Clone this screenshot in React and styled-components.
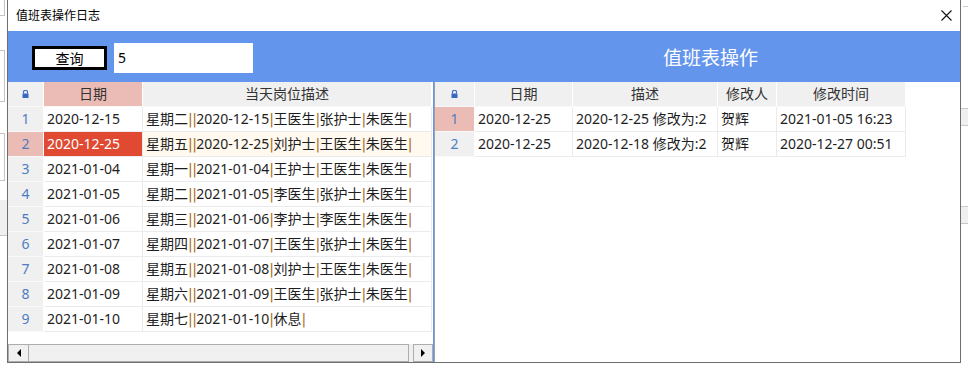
import styled, { createGlobalStyle } from 'styled-components';

const GlobalStyle = createGlobalStyle`
  html, body {
    margin: 0;
    padding: 0;
    background: #FFFFFF;
  }

  body {
    font-family: "Noto Sans", "Noto Sans CJK SC", sans-serif;
    color: #1E1E1E;
  }
`

const dutyRows = [
  ["2020-12-15", "星期二||2020-12-15|王医生|张护士|朱医生|"],
  ["2020-12-25", "星期五||2020-12-25|刘护士|王医生|朱医生|"],
  ["2021-01-04", "星期一||2021-01-04|王护士|王医生|朱医生|"],
  ["2021-01-05", "星期二||2021-01-05|李医生|张护士|朱医生|"],
  ["2021-01-06", "星期三||2021-01-06|李护士|李医生|朱医生|"],
  ["2021-01-07", "星期四||2021-01-07|王医生|张护士|朱医生|"],
  ["2021-01-08", "星期五||2021-01-08|刘护士|王医生|朱医生|"],
  ["2021-01-09", "星期六||2021-01-09|王医生|张护士|朱医生|"],
  ["2021-01-10", "星期七||2021-01-10|休息|"],
]

const logRows = [
  ["2020-12-25", "2020-12-25 修改为:2", "贺辉", "2021-01-05 16:23"],
  ["2020-12-25", "2020-12-18 修改为:2", "贺辉", "2020-12-27 00:51"],
]

const LEFT_COLS = "36px 99px 289px"
const RIGHT_COLS = "40px 98px 145px 59px 129px"

function PipeText({ text }) {
  const parts = text.split("|")
  return (
    <span>
      {parts.map((part, i) => (
        <span key={i}>
          {part}
          {i < parts.length - 1 && <Pipe>|</Pipe>}
        </span>
      ))}
    </span>
  )
}

function LockIcon() {
  return (
    <svg width="7" height="8" viewBox="0 0 7 8">
      <path d="M1.5 3.5 V2.2 A2 2 0 0 1 5.5 2.2 V3.5" fill="none" stroke="#3B67C4" strokeWidth="1.1" />
      <rect x="0.5" y="3.5" width="6" height="4.5" fill="#3B67C4" />
    </svg>
  )
}

function CloseIcon() {
  return (
    <svg width="11" height="11" viewBox="0 0 11 11">
      <path d="M0.5 0.5 L10.5 10.5 M10.5 0.5 L0.5 10.5" stroke="#111" strokeWidth="1.1" />
    </svg>
  )
}

export default function App() {
  return (
    <>
      <GlobalStyle />
      <Page>

        <Backdrop>
          <BackBox $h={15} $top={0} $open="top" />
          <BackBox $h={50} $top={34} />
          <BackBox $h={46} $top={31} />
          <BackFill $h={35} $top={19} />
        </Backdrop>

        <Dialog>
          <TitleBar>
            <span>值班表操作日志</span>
            <CloseIcon />
          </TitleBar>

          <Body>
            <Toolbar>
              <ToolLeft>
                <QueryButton>查询</QueryButton>
                <SearchInput>5</SearchInput>
              </ToolLeft>
              <ToolTitle>值班表操作</ToolTitle>
            </Toolbar>

            <Panels>
              <LeftPanel>
                <Row $cols={LEFT_COLS}>
                  <Cell $kind="corner"><LockIcon /></Cell>
                  <Cell $kind="head" $tone="pink">日期</Cell>
                  <Cell $kind="head">当天岗位描述</Cell>
                </Row>
                {dutyRows.map((row, i) => (
                  <Row key={i} $cols={LEFT_COLS}>
                    <Cell $kind="rowhead" $tone={i === 1 ? "pink" : null}>{i + 1}</Cell>
                    <Cell $kind="data" $tone={i === 1 ? "red" : null}>{row[0]}</Cell>
                    <Cell $kind="data" $tone={i === 1 ? "cream" : null}><PipeText text={row[1]} /></Cell>
                  </Row>
                ))}
                <Filler />
                <ScrollBar>
                  <ArrowButton $first><Arrow $dir="left" /></ArrowButton>
                  <Thumb />
                  <TrackGap />
                  <ArrowButton><Arrow $dir="right" /></ArrowButton>
                </ScrollBar>
              </LeftPanel>

              <RightPanel>
                <Row $cols={RIGHT_COLS}>
                  <Cell $kind="corner"><LockIcon /></Cell>
                  <Cell $kind="head">日期</Cell>
                  <Cell $kind="head">描述</Cell>
                  <Cell $kind="head">修改人</Cell>
                  <Cell $kind="head">修改时间</Cell>
                </Row>
                {logRows.map((row, i) => (
                  <Row key={i} $cols={RIGHT_COLS}>
                    <Cell $kind="rowhead" $tone={i === 0 ? "pink" : null}>{i + 1}</Cell>
                    {row.map((value, j) => (
                      <Cell key={j} $kind="data">{value}</Cell>
                    ))}
                  </Row>
                ))}
              </RightPanel>
            </Panels>
          </Body>
        </Dialog>

        <Backdrop>
          <BackLine $top={6} />
          <BackFill $h={16} $top={101} $lined />
          <BackFill $h={16} $top={80} $lined />
        </Backdrop>

      </Page>
    </>
  )
}

const Page = styled.div`
  display: flex;
  align-items: flex-start;

  width: 968px;
  height: 370px;
  overflow: hidden;

  background: #FFFFFF;
`

const Backdrop = styled.div`
  display: flex;
  flex-direction: column;

  width: 7px;
  height: 370px;
`

const BackBox = styled.div`
  width: 4px;
  height: ${p => p.$h}px;
  margin-top: ${p => p.$top}px;

  border: 1px solid #C4C4C4;
  border-left: none;
  ${p => p.$open === "top" && "border-top: none;"}
`

const BackFill = styled.div`
  width: 100%;
  height: ${p => p.$h}px;
  margin-top: ${p => p.$top}px;

  background: #F0F0F0;
  border-bottom: 1px solid #C8C8C8;
  ${p => p.$lined && "border-top: 1px solid #C8C8C8;"}
`

const BackLine = styled.div`
  width: 100%;
  height: 0;
  margin-top: ${p => p.$top}px;
  margin-left: 2px;

  border-top: 1px solid #D0D0D0;
`

const Dialog = styled.div`
  display: flex;
  flex-direction: column;

  width: 952px;
  height: 362px;

  background: #FFFFFF;
  border: 1px solid #6E6E6E;
  border-top: none;
`

const TitleBar = styled.div`
  display: flex;
  justify-content: space-between;
  align-items: center;

  height: 31px;
  padding: 0 8px 0 8px;

  font-size: 12px;
  line-height: 16px;
  color: #000000;
`

const Body = styled.div`
  display: flex;
  flex-direction: column;
  flex: 1;

  background: #6495ED;
`

const Toolbar = styled.div`
  display: flex;
  align-items: center;

  height: 51px;
`

const ToolLeft = styled.div`
  display: flex;
  align-items: center;
  gap: 7px;

  width: 403px;
  padding-left: 24px;
  padding-top: 2px;
`

const QueryButton = styled.button`
  display: flex;
  justify-content: center;
  align-items: center;

  width: 75px;
  height: 24px;
  padding: 0;

  background: #FFFFFF;
  border: 2px solid #000000;
  box-shadow: inset 0 0 0 1px #000000;
  border-radius: 0;

  font-family: "Noto Sans CJK SC", sans-serif;
  font-size: 14px;
  line-height: 16px;
  color: #000000;
`

const SearchInput = styled.div`
  display: flex;
  align-items: center;

  width: 135px;
  height: 30px;
  padding-left: 4px;

  background: #FFFFFF;

  font-size: 14px;
  color: #000000;
`

const ToolTitle = styled.div`
  flex: 1;
  padding-left: 26px;

  text-align: center;
  font-family: "Noto Sans CJK SC", sans-serif;
  font-size: 19px;
  line-height: 24px;
  color: #FFFFFF;
`

const Panels = styled.div`
  display: flex;
  gap: 1px;

  height: 280px;
`

const LeftPanel = styled.div`
  display: flex;
  flex-direction: column;

  width: 425px;

  background: #FFFFFF;
`

const RightPanel = styled.div`
  display: flex;
  flex-direction: column;

  width: 525px;

  background: #FFFFFF;
  border-left: 1px solid #A0A0A0;
`

const Row = styled.div`
  display: grid;
  grid-template-columns: ${p => p.$cols};

  height: 25px;
`

const toneColors = {
  pink: "#EBBCB5",
  red: "#E04A32",
  cream: "#FFF9EF",
}

const kindBackgrounds = {
  corner: "#F0F0F0",
  head: "#F0F0F0",
  rowhead: "#F0F0F0",
  data: "#FFFFFF",
}

const Cell = styled.div`
  display: flex;
  align-items: center;
  justify-content: ${p => (p.$kind === "data" ? "flex-start" : "center")};

  overflow: hidden;
  padding-left: ${p => (p.$kind === "data" ? "3px" : "0")};
  white-space: nowrap;

  background: ${p => (p.$tone ? toneColors[p.$tone] : kindBackgrounds[p.$kind])};
  border-right: 1px solid ${p => (p.$kind === "data" ? "#EBEBEB" : "#FFFFFF")};
  border-bottom: 1px solid ${p => (p.$kind === "data" ? "#EBEBEB" : "#F9F9F9")};

  font-size: 14px;
  line-height: 18px;
  color: ${p => {
    if (p.$tone === "red") return "#FFFFFF"
    if (p.$kind === "rowhead") return "#4E7DBF"
    if (p.$kind === "head") return "#333333"
    return "#1E1E1E"
  }};
`

const Pipe = styled.span`
  font-family: "DejaVu Sans", sans-serif;
  letter-spacing: -0.6px;
  color: #A86E22;
`

const Filler = styled.div`
  flex: 1;
`

const ScrollBar = styled.div`
  display: flex;

  height: 18px;

  background: #F0F0F0;
`

const ArrowButton = styled.div`
  display: flex;
  justify-content: center;
  align-items: center;

  width: ${p => (p.$first ? "19px" : "18px")};

  border: 1px solid #ADADAD;
  ${p => p.$first && "border-right: none;"}
  background: #F0F0F0;
`

const Arrow = styled.div`
  width: 0;
  height: 0;

  border-top: 4px solid transparent;
  border-bottom: 4px solid transparent;
  ${p => (p.$dir === "left" ? "border-right: 4px solid #000000;" : "border-left: 4px solid #000000;")}
`

const Thumb = styled.div`
  width: 379px;

  background: #F0F0F0;
  border: 1px solid #ADADAD;
`

const TrackGap = styled.div`
  flex: 1;
`
